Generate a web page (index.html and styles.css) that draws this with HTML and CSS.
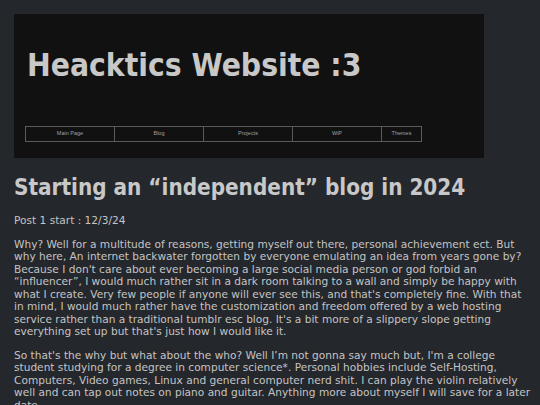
FILE: index.html
```html
<!DOCTYPE html>
<html>
<head>
<meta charset="utf-8">
<link rel="stylesheet" href="styles.css">
</head>
<body>
<header class="banner">
  <h1 class="site-title">Heacktics Website :3</h1>
  <nav class="nav">
    <a class="nav-item w-main" href="#">Main Page</a>
    <a class="nav-item w-main" href="#">Blog</a>
    <a class="nav-item w-main" href="#">Projects</a>
    <a class="nav-item w-main" href="#">WiP</a>
    <a class="nav-item w-small" href="#">Themes</a>
  </nav>
</header>
<main class="post">
  <h2 class="post-title">Starting an “independent” blog in 2024</h2>
  <p>Post 1 start : 12/3/24</p>
  <p>Why? Well for a multitude of reasons, getting myself out there, personal achievement ect. But why here, An internet backwater forgotten by everyone emulating an idea from years gone by? Because I don't care about ever becoming a large social media person or god forbid an “influencer”, I would much rather sit in a dark room talking to a wall and simply be happy with what I create. Very few people if anyone will ever see this, and that's completely fine. With that in mind, I would much rather have the customization and freedom offered by a web hosting service rather than a traditional tumblr esc blog. It's a bit more of a slippery slope getting everything set up but that's just how I would like it.</p>
  <p>So that's the why but what about the who? Well I’m not gonna say much but, I'm a college student studying for a degree in computer science*. Personal hobbies include Self-Hosting, Computers, Video games, Linux and general computer nerd shit. I can play the violin relatively well and can tap out notes on piano and guitar. Anything more about myself I will save for a later date.</p>
</main>
</body>
</html>
```
FILE: styles.css
```css
html, body {
  margin: 0;
  background: #24272c;
}
body {
  padding: 14px 8px 14px 14px;
  font-family: "DejaVu Sans", Verdana, sans-serif;
  font-size: 10.6px;
  line-height: 12.5px;
  color: #c4c4c4;
}
.banner {
  width: 470px;
  height: 144px;
  background: #111111;
  box-sizing: border-box;
  padding: 0 11px;
  display: flex;
  flex-direction: column;
}
.site-title {
  margin: 32px 0 0 2px;
  font-family: "DejaVu Sans Condensed", "DejaVu Sans", sans-serif;
  font-size: 31.5px;
  font-weight: bold;
  color: #c8c8c8;
  line-height: 38px;
}
.nav {
  margin-top: 42px;
  display: flex;
}
.nav-item {
  display: flex;
  align-items: center;
  justify-content: center;
  height: 16px;
  box-sizing: border-box;
  border: 1px solid #5a5a5a;
  margin-left: -1px;
  font-family: "Liberation Sans", Arial, sans-serif;
  font-size: 5.5px;
  line-height: 1;
  color: #a0a0a0;
  text-decoration: none;
}
.nav-item:first-child { margin-left: 0; }
.w-main { width: 90px; }
.w-small { width: 41px; }
.post-title {
  margin: 16px 0 0 0;
  font-family: "DejaVu Sans Condensed", "DejaVu Sans", sans-serif;
  font-size: 22.3px;
  line-height: 26px;
  font-weight: bold;
  color: #c8c8c8;
}
.post p {
  margin: 11px 0;
}
.post-title + p { margin-top: 14px; }
```
